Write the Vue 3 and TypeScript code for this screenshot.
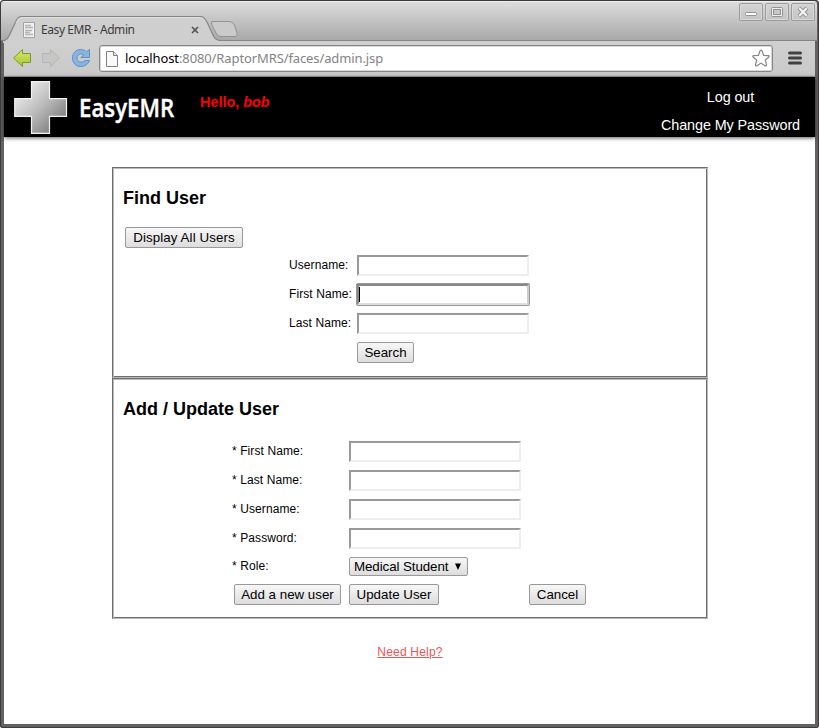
<script setup lang="ts">
import { ref } from 'vue'

interface Field { id: string; label: string; active?: boolean; type?: string }

const findFields: Field[] = [
  { id: 'find-username', label: 'Username:' },
  { id: 'find-first', label: 'First Name:', active: true },
  { id: 'find-last', label: 'Last Name:' },
]
const editFields: Field[] = [
  { id: 'edit-first', label: '* First Name:' },
  { id: 'edit-last', label: '* Last Name:' },
  { id: 'edit-username', label: '* Username:' },
  { id: 'edit-password', label: '* Password:', type: 'password' },
]
const values = ref<Record<string, string>>({})
</script>

<template>
  <div class="window">
    <div class="titlebar">
      <div class="tabs">
        <div class="tab">
          <svg class="tab-shape" width="237" height="27" viewBox="0 0 237 27">
            <path d="M0 27V25C4 24 5 22 7 18L13 5Q15 .5 19 .5H197Q201 .5 204 6L211 21Q213 24.5 218 24.5H237V27Z" fill="#cfcfcf" />
            <path d="M0 25C4 24 5 22 7 18L13 5Q15 .5 19 .5H197Q201 .5 204 6L211 21Q213 24.5 218 24.5H237" fill="none" stroke="#858585" stroke-width="1.2" />
            <path d="M13 7Q15 1.8 19 1.7H197Q200 1.7 202 5" fill="none" stroke="#e0e0e0" />
            <path d="M209 5.500H226Q230 5.500 231.500 9L234 17Q235 20.500 231 20.500H218Q214.500 20.500 213 17L208.500 8Q207.500 5.500 210 5.500Z" fill="#cacaca" stroke="#929292" />
          </svg>
          <svg class="tab-icon" width="12" height="16" viewBox="0 0 12 16">
            <path d="M.5.5H11.500V15.500H.5Z" fill="#f1f1f1" stroke="#a2a2a2" />
            <path d="M2 3.500H8M2 5.500H10M2 8.500H9M2 10.500H7M2 12.500H10" stroke="#b5b5b5" stroke-width="1.400" />
          </svg>
          <span class="tab-title">Easy EMR - Admin</span>
          <svg class="tab-close" width="8" height="8" viewBox="0 0 8 8"><path d="M1 1L7 7M7 1L1 7" stroke="#505050" stroke-width="1.600" /></svg>
        </div>
      </div>
      <div class="controls">
        <button class="control" aria-label="Minimize">
          <svg width="22" height="16" viewBox="0 0 22 16"><rect x="5.500" y="8.500" width="11" height="3" rx="1" fill="#fff" stroke="#939393" /></svg>
        </button>
        <button class="control" aria-label="Maximize">
          <svg width="22" height="16" viewBox="0 0 22 16"><rect x="5.500" y="3.500" width="11" height="9" rx="1" fill="#eee" stroke="#939393" /><rect x="7.500" y="5.500" width="7" height="5" fill="#c8c8c8" stroke="#939393" /></svg>
        </button>
        <button class="control" aria-label="Close">
          <svg width="22" height="16" viewBox="0 0 22 16"><path d="M7 4L15 12M15 4L7 12" stroke="#939393" stroke-width="4.200" /><path d="M7.300 4.300L14.700 11.700M14.700 4.300L7.300 11.700" stroke="#f4f4f4" stroke-width="2.200" /></svg>
        </button>
      </div>
    </div>

    <div class="toolbar">
      <svg class="nav" width="20" height="20" viewBox="0 0 20 20">
        <defs><linearGradient id="back" x2="0" y2="1"><stop stop-color="#d6e967" /><stop offset="1" stop-color="#a6c633" /></linearGradient></defs>
        <path d="M1.500 10L10.500 1.500V5.500H18.500V14.500H10.500V18.500Z" fill="url(#back)" stroke="#799a2b" stroke-linejoin="round" />
      </svg>
      <svg class="nav" width="20" height="20" viewBox="0 0 20 20">
        <path d="M18.500 10L9.500 1.500V5.500H1.500V14.500H9.500V18.500Z" fill="#c6c6c4" stroke="#b5b5b2" stroke-linejoin="round" />
      </svg>
      <svg class="reload" width="20" height="20" viewBox="0 0 20 20">
        <path d="M15.500 3.700L18.500 1.500V9.500H9.800L12.700 6.700C9.500 4.800 6 6.700 6 10C6 14 11 15.700 14 12.500H18.500C17 16.500 13.500 18.500 9.700 18.500C5 18.500 1.500 15 1.500 10C1.500 5 5 1.500 9.800 1.500C12 1.500 14 2.300 15.500 3.700Z" fill="#86b4e3" stroke="#6390c4" stroke-linejoin="round" />
      </svg>
      <div class="address">
        <svg width="12" height="16" viewBox="0 0 12 16"><path d="M.5.5H7.500L11.500 4.500V15.500H.5Z" fill="#f8f8f8" stroke="#818181" /><path d="M7.500.5V4.500H11.500" fill="#e5e5e5" stroke="#818181" /></svg>
        <span class="url"><b>localhost</b>:8080/RaptorMRS/faces/admin.jsp</span>
        <svg class="star" width="20" height="19" viewBox="0 0 20 19"><path d="M10 1.200Q10.900 1.200 11.200 2.300L12.600 6.500L17.300 6.700Q19 7 17.600 8.300L14.300 11L15.500 15.600Q15.700 17.500 14 16.700L10 14.100L6 16.700Q4.300 17.500 4.500 15.600L5.700 11L2.400 8.300Q1 7 2.700 6.700L7.400 6.500L8.800 2.300Q9.100 1.200 10 1.200Z" fill="#fff" stroke="#858585" stroke-width="1.200" /></svg>
      </div>
      <svg class="menu" width="14" height="14" viewBox="0 0 14 14"><path d="M1.500 2H12.500M1.500 7H12.500M1.500 12H12.500" stroke="#414141" stroke-width="3" stroke-linecap="round" /></svg>
    </div>

    <div class="page">
      <header class="header">
        <svg class="cross" width="54" height="54" viewBox="0 0 54 54">
          <defs><linearGradient id="metal" x2="1" y2="1"><stop offset=".1" stop-color="#eee" /><stop offset=".5" stop-color="#bababa" /><stop offset=".9" stop-color="#777" /></linearGradient></defs>
          <path d="M17.500 .7H35.500V17.700H52.500V35.300H35.500V52.300H17.500V35.300H.7V17.700H17.500Z" fill="url(#metal)" stroke="#f2f2f2" stroke-width="1.200" />
        </svg>
        <div class="brand"><span>EasyEMR</span></div>
        <div class="greeting">Hello, <em>bob</em></div>
        <nav class="account"><a>Log out</a><a>Change My Password</a></nav>
      </header>

      <main class="main">
        <section class="panel find">
          <h2>Find User</h2>
          <button class="btn all">Display All Users</button>
          <form class="find-form" @submit.prevent>
            <template v-for="f in findFields" :key="f.id">
              <label :for="f.id">{{ f.label }}</label>
              <div class="field" :class="{ active: f.active }">
                <input :id="f.id" v-model="values[f.id]" type="text">
              </div>
            </template>
            <button class="btn search">Search</button>
          </form>
        </section>

        <section class="panel edit">
          <h2>Add / Update User</h2>
          <form class="edit-form" @submit.prevent>
            <template v-for="f in editFields" :key="f.id">
              <label :for="f.id">{{ f.label }}</label>
              <div class="field"><input :id="f.id" v-model="values[f.id]" :type="f.type ?? 'text'"></div>
            </template>
            <label class="role-label">* Role:</label>
            <button class="btn role" type="button">Medical Student
              <svg width="6" height="8" viewBox="0 0 6 8"><path d="M0 .5H6L3 7Z" /></svg>
            </button>
          </form>
          <div class="actions">
            <button class="btn add">Add a new user</button>
            <button class="btn update">Update User</button>
            <button class="btn cancel">Cancel</button>
          </div>
        </section>
        <a class="help">Need Help?</a>
      </main>
    </div>
  </div>
</template>

<style>
body { margin: 0; overflow: hidden; background: #fff; }
</style>

<style scoped>
* { box-sizing: border-box; }
svg { display: block; flex: none; }
button { margin: 0; }
.window { width: 819px; height: 728px; display: flex; flex-direction: column; padding: 2px 4px 4px; border-radius: 4px 4px 3px 3px; background: #626262; box-shadow: inset 0 0 0 1px #3d3b3c; font-family: "Liberation Sans", Arial, sans-serif; overflow: hidden; }
.titlebar { height: 39px; flex: none; display: flex; justify-content: space-between; margin: 0 -2px 0 -3px; background: linear-gradient(#dcdcdc, #a9a9a9); border-bottom: 1px solid #858585; border-radius: 3px 3px 0 0; box-shadow: 0 -1px #eee; }
.tabs { padding: 14px 0 0 3px; }
.tab { position: relative; width: 237px; height: 26px; display: flex; align-items: center; padding: 2px 0 0 19px; }
.tab-shape { position: absolute; left: -1px; top: 0; }
.tab-icon, .tab-title, .tab-close { position: relative; }
.tab-title { margin-left: 6px; width: 149px; font: 12px/16px "Noto Sans", "Open Sans", sans-serif; letter-spacing: -.42px; color: #3c3c3c; white-space: nowrap; }
.tab-close { margin-left: 1px; }
.controls { display: flex; gap: 2px; padding: 1px 2px 0 0; }
.control { width: 24px; height: 18px; padding: 0; border: 1px solid #9c9c9c; border-radius: 2px; background: linear-gradient(#d4d4d4, #c4c4c4); box-shadow: inset 0 0 0 1px #d9d9d9; }
.toolbar { height: 36px; flex: none; display: flex; align-items: center; background: linear-gradient(#d0d0d0, #c9c9c9); border-bottom: 1px solid #9b9b9b; padding: 0 13px 0 8px; }
.nav { margin: 0 9px 2px 0; }
.reload { margin: 0 8px 2px 1px; }
.address { width: 674px; height: 27px; display: flex; align-items: center; border: 1px solid #858585; border-radius: 3px; background: #fff; padding: 0 1px 0 6px; box-shadow: inset 0 0 0 1px #d8d8d8; }
.url { margin-left: 7px; font: 13px/19px "Noto Sans", "Open Sans", sans-serif; letter-spacing: -.11px; color: #838383; white-space: nowrap; }
.url b { color: #000; font-weight: 400; }
.star { margin-left: auto; }
.menu { margin-left: 15px; margin-bottom: 1px; }
.page { flex: 1; min-height: 0; background: #fff; }
.header { height: 60px; display: flex; background: #000; box-shadow: 0 1px 4px rgba(0,0,0,.65); }
.cross { margin: 4px 0 0 10px; }
.brand { width: 111px; margin: 13px 0 0 11px; font: 600 25px/34px "Open Sans", "Noto Sans", sans-serif; color: #fff; -webkit-text-stroke: .4px #fff; }
.brand span { display: inline-block; transform: scaleX(.89); transform-origin: 0 0; }
.greeting { margin: 15px 0 0 10px; font: 700 14.4px/20px "Liberation Sans", Arial, sans-serif; color: #f00; white-space: nowrap; }
.account { margin-left: auto; padding: 6px 15px 0 0; display: flex; flex-direction: column; align-items: center; color: #fff; font-size: 14.4px; letter-spacing: -.1px; line-height: 28px; }
.main { width: 596px; margin: 30px 0 0 108px; display: flex; flex-direction: column; }
.panel { border: 1px solid; border-color: #6d6d6d #bbb #bbb #6d6d6d; box-shadow: inset 1px 1px #bbb, inset -1px -1px #6d6d6d; padding: 0 10px; }
.find { height: 211px; }
.edit { height: 241px; }
h2 { margin: 19px 0 0; font-size: 18px; line-height: 22px; color: #000; }
.btn { height: 21px; padding: 0; border: 1px solid #999; border-radius: 2px; background: linear-gradient(#f7f7f7, #ddd); color: #000; font: 13.333px/17px "Liberation Sans", Arial, sans-serif; white-space: nowrap; }
.all { display: block; width: 118px; margin: 18px 0 0 2px; letter-spacing: .1px; }
.find-form { display: grid; grid-template-columns: 68px 172px; row-gap: 8px; margin: 7px 0 0 166px; }
label { font-size: 12px; line-height: 20px; letter-spacing: .09px; color: #000; }
.field { position: relative; height: 21px; }
input { display: block; width: 172px; height: 21px; margin: 0; border: 2px solid; border-color: #999 #eee #eee #999; padding: 0 2px; background: #fff; outline: 0; font: 13.333px "Liberation Sans", sans-serif; }
.active input { box-shadow: 0 0 0 1px #999; border-radius: 1px; border-color: #888 #ccc #ddd #888; }
.active::after { content: ""; position: absolute; left: 2px; top: 3px; width: 1px; height: 15px; background: #000; }
.search { grid-column: 2; width: 57px; }
.edit-form { display: grid; grid-template-columns: 117px 172px; row-gap: 8px; margin: 21px 0 0 109px; }
.role { width: 119px; height: 19px; line-height: 17px; letter-spacing: -.08px; display: flex; align-items: center; gap: 7px; padding-left: 4px; }
.role-label { line-height: 18px; }
.actions { display: flex; margin: 8px 0 0 111px; }
.add { width: 107px; }
.update { width: 90px; margin-left: 8px; }
.cancel { width: 57px; margin-left: 90px; }
.help { align-self: center; margin-top: 24px; font-size: 12px; line-height: 18px; letter-spacing: .2px; color: #ed5353; text-decoration: underline; }
</style>
